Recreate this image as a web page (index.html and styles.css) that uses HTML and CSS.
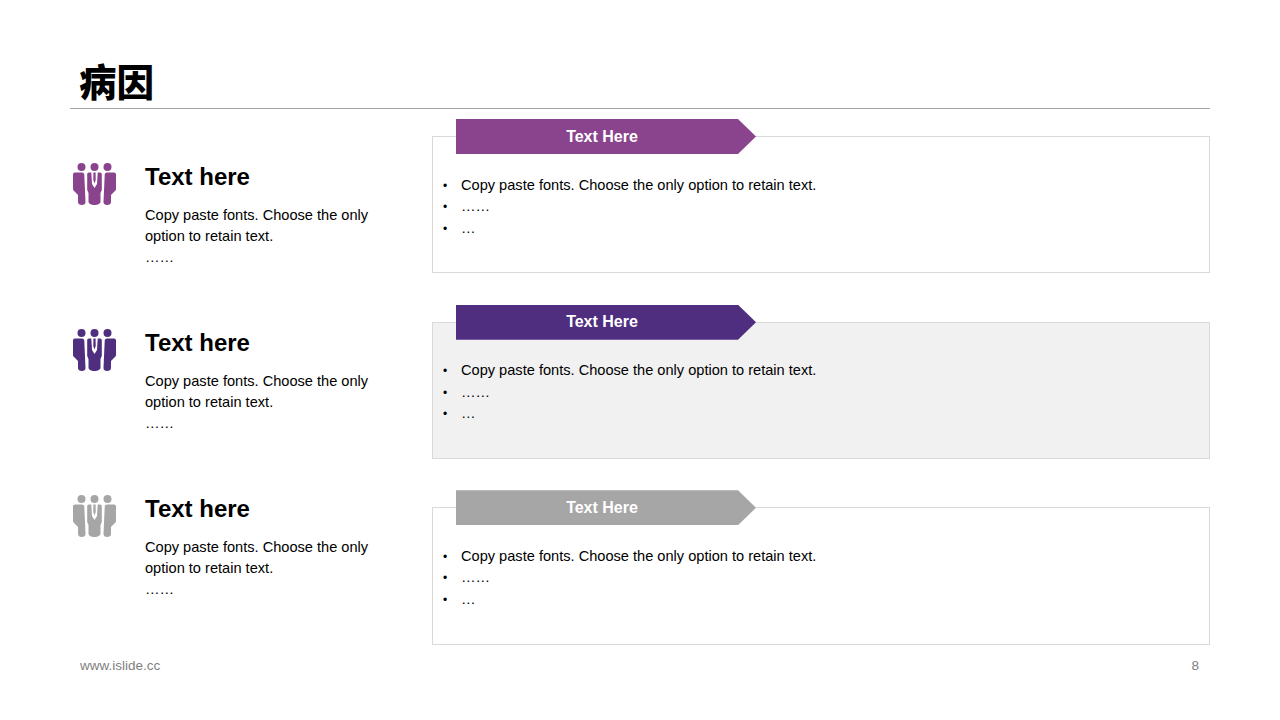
FILE: index.html
```html
<!DOCTYPE html>
<html lang="zh">
<head>
<meta charset="utf-8">
<title>病因</title>
<link rel="stylesheet" href="styles.css">
</head>
<body>
<svg class="defs" width="0" height="0" aria-hidden="true">
  <symbol id="people" viewBox="0 0 43 42">
    <circle cx="8.500" cy="4" r="4"/>
    <circle cx="21.500" cy="4" r="4"/>
    <circle cx="34.500" cy="4" r="4"/>
    <path d="M2 9.500H9C10.500 9.500 11.300 10.500 11.300 12L12.500 39C12.500 41 11 42 9 42 6.500 42 5 41 5 39V32L.8 27.800C.3 27.300 0 26.800 0 26V11.500C0 10.300.8 9.500 2 9.500Z"/>
    <path d="M41 9.500H34C32.500 9.500 31.700 10.500 31.700 12L30.500 39C30.500 41 32 42 34 42 36.500 42 38 41 38 39V32L42.200 27.800C42.700 27.300 43 26.800 43 26V11.500C43 10.300 42.200 9.500 41 9.500Z"/>
    <path d="M16 9.500H18.300L19 21 21.500 25 24 21 24.700 9.500H27C28.200 9.500 28.800 10.300 28.800 11.500V27L27.500 30V38.500C27.500 40.800 25 42 21.500 42 18 42 15.500 40.800 15.500 38.500V30L14.200 27V11.500C14.200 10.300 14.800 9.500 16 9.500Z"/>
    <path d="M20.400 9.500H22.600L22.700 17 21.500 20.500 20.300 17Z"/>
  </symbol>
</svg>
<main class="slide">
  <header class="head"><h1 class="title">病因</h1></header>
  <div class="columns">
    <div class="intros">
      <section class="intro">
        <svg class="icon plum"><use href="#people"/></svg>
        <div class="copy">
          <h2 class="copy-head">Text here</h2>
          <p class="copy-text">Copy paste fonts. Choose the only option to retain text.<br>……</p>
        </div>
      </section>
      <section class="intro">
        <svg class="icon indigo"><use href="#people"/></svg>
        <div class="copy">
          <h2 class="copy-head">Text here</h2>
          <p class="copy-text">Copy paste fonts. Choose the only option to retain text.<br>……</p>
        </div>
      </section>
      <section class="intro">
        <svg class="icon grey"><use href="#people"/></svg>
        <div class="copy">
          <h2 class="copy-head">Text here</h2>
          <p class="copy-text">Copy paste fonts. Choose the only option to retain text.<br>……</p>
        </div>
      </section>
    </div>
    <div class="panels">
      <section class="panel">
        <div class="ribbon bg-plum">Text Here</div>
        <ul class="list"><li>Copy paste fonts. Choose the only option to retain text.</li><li>……</li><li>…</li></ul>
      </section>
      <section class="panel shaded">
        <div class="ribbon bg-indigo">Text Here</div>
        <ul class="list"><li>Copy paste fonts. Choose the only option to retain text.</li><li>……</li><li>…</li></ul>
      </section>
      <section class="panel">
        <div class="ribbon bg-grey">Text Here</div>
        <ul class="list"><li>Copy paste fonts. Choose the only option to retain text.</li><li>……</li><li>…</li></ul>
      </section>
    </div>
  </div>
  <footer class="foot"><span>www.islide.cc</span><span>8</span></footer>
</main>
</body>
</html>
```
FILE: styles.css
```css
* { box-sizing: border-box; }
html, body { margin: 0; padding: 0; background: #fff; }
.defs { position: absolute; }
.slide {
  width: 1280px; height: 720px; padding: 0 70px; overflow: hidden;
  display: flex; flex-direction: column;
  font-family: "Liberation Sans", Arial, "Noto Sans CJK SC", sans-serif; color: #000;
}
.head { height: 109px; padding: 57px 0 0 9px; border-bottom: 1px solid #a6a6a6; flex: none; }
.title { margin: 0; font-size: 37.500px; line-height: 46px; font-weight: 900; font-family: "Noto Sans CJK SC", sans-serif; }
.columns { display: grid; grid-template-columns: 362px 778px; }
.intros { display: flex; flex-direction: column; gap: 46px; padding: 54px 0 0 3px; }
.intro { display: flex; gap: 29px; height: 120px; }
.icon { width: 43px; height: 42px; flex: none; }
.plum { fill: #8a448e; }
.indigo { fill: #4f2d7f; }
.grey { fill: #a6a6a6; }
.copy { width: 240px; }
.copy-head { margin: 0; font-size: 24px; line-height: 28px; font-weight: 700; }
.copy-text { margin: 14px 0 0; font-size: 14.600px; line-height: 21.200px; }
.panels { display: flex; flex-direction: column; gap: 48.200px; padding-top: 27px; }
.panel { border: 1px solid #d9d9d9; height: 137.400px; }
.shaded { background: #f1f1f1; }
.ribbon {
  width: 300px; height: 35px; margin: -17.900px 0 0 23px;
  padding: 0.600px 8px 0 0;
  display: flex; align-items: center; justify-content: center;
  color: #fff; font-size: 16px; font-weight: 700;
  clip-path: polygon(0 0, 282px 0, 100% 50%, 282px 100%, 0 100%);
}
.bg-plum { background: #8a448e; }
.bg-indigo { background: #4f2d7f; }
.bg-grey { background: #a6a6a6; }
.list { margin: 20.800px 0 0; padding: 0 0 0 10px; list-style: none; font-size: 14.600px; line-height: 21.300px; }
.list li { display: flex; align-items: baseline; gap: 13px; }
.list li::before { content: "•"; width: 5px; font-size: 12px; line-height: 1; flex: none; }
.foot {
  display: flex; justify-content: space-between; padding: 12.500px 11px 0 10px;
  font-size: 13.500px; line-height: 18px; color: #7f7f7f;
}
```
